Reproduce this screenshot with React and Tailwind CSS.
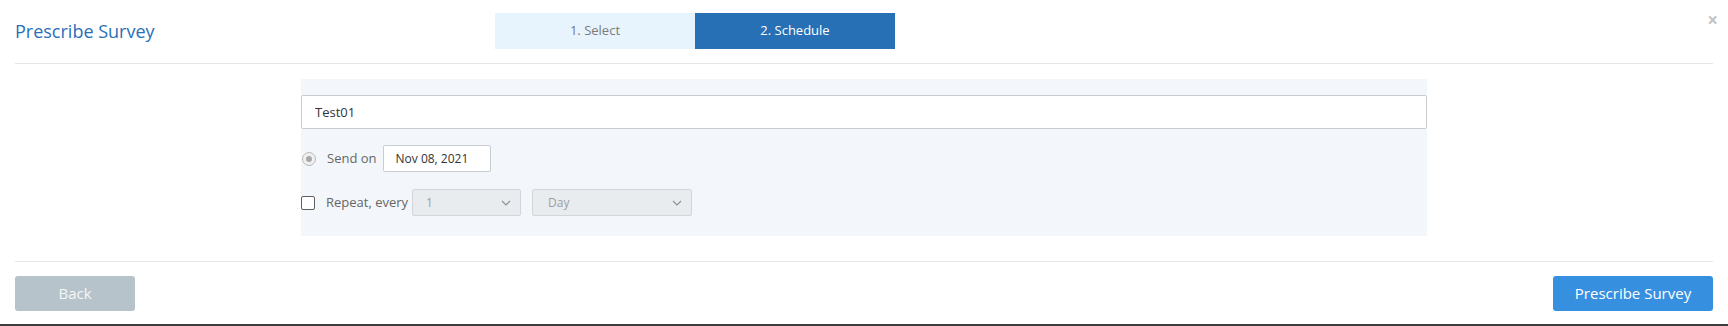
import React, { useState } from 'react';

const Chevron = () => (
  <svg width="10" height="6" viewBox="0 0 10 6" fill="none" className="shrink-0">
    <path d="M1 1l4 4 4-4" stroke="#8a8f96" strokeWidth="1.1" />
  </svg>
);

const PrescribeSurvey = () => {
  const [name, setName] = useState('Test01');

  return (
    <div className="w-full h-[326px] bg-white font-['Open_Sans',sans-serif]">
      <div className="relative h-[326px] flex flex-col px-[15px] border-b-2 border-[#3d3d3d]">
        {/* Header */}
        <div className="h-[64px] flex items-start border-b border-[#e5e5e5] shrink-0">
          <h1 className="w-[480px] pt-[19px] text-[18px] leading-[24px] text-[#2a6fb8]">Prescribe Survey</h1>
          <div className="mt-[13px] flex">
            <div className="w-[200px] h-[36px] flex items-center justify-center bg-[#e7f4fd] text-[13px] text-[#7a7a7a]">1. Select</div>
            <div className="w-[200px] h-[36px] flex items-center justify-center bg-[#2770b5] text-[13px] text-white">2. Schedule</div>
          </div>
        </div>
        <button className="absolute right-[10px] top-[10px] text-[19px] font-bold leading-[20px] text-[#c4c4c4]">×</button>

        {/* Body */}
        <div className="pt-[15px] pb-[25px] border-b border-[#e5e5e5] shrink-0">
          <div className="mx-auto w-[1126px] h-[157px] bg-[#f3f6fa] pt-[16px]">
            <input
              value={name}
              onChange={(e) => setName(e.target.value)}
              className="w-full h-[34px] bg-white border border-[#c9cdd2] rounded-[2px] px-[13px] text-[13px] text-[#333] outline-none"
            />
            <div className="mt-[16px] flex items-center h-[27px]">
              <span className="ml-[1px] w-[14px] h-[14px] rounded-full border border-[#b8b8b8] bg-[#f0f0f0] flex items-center justify-center">
                <span className="w-[6px] h-[6px] rounded-full bg-[#a8a8a8]" />
              </span>
              <span className="ml-[11px] text-[13px] text-[#666]">Send on</span>
              <div className="ml-[6px] w-[108px] h-[27px] bg-white border border-[#c9cdd2] rounded-[2px] flex items-center pl-[12px] text-[12px] text-[#333]">Nov 08, 2021</div>
            </div>
            <div className="mt-[17px] flex items-center h-[27px]">
              <span className="w-[14px] h-[14px] rounded-[2px] border-[1.5px] border-[#5f5f5f] bg-white" />
              <span className="ml-[11px] text-[13px] text-[#666]">Repeat, every</span>
              <div className="ml-[4px] w-[109px] h-[27px] bg-[#e9ecef] border border-[#d2d6db] rounded-[2px] flex items-center justify-between pl-[13px] pr-[9px] text-[12px] text-[#9a9ea3]">
                <span>1</span>
                <Chevron />
              </div>
              <div className="ml-[11px] w-[160px] h-[27px] bg-[#e9ecef] border border-[#d2d6db] rounded-[2px] flex items-center justify-between pl-[15px] pr-[9px] text-[12px] text-[#9a9ea3]">
                <span>Day</span>
                <Chevron />
              </div>
            </div>
          </div>
        </div>

        {/* Footer */}
        <div className="pt-[14px] flex justify-between">
          <button className="w-[120px] h-[35px] rounded-[3px] bg-[#b6c3cb] text-[15px] text-[#f4f6f8]">Back</button>
          <button className="w-[160px] h-[35px] rounded-[3px] bg-[#378fe0] text-[15px] text-white">Prescribe Survey</button>
        </div>
      </div>
    </div>
  );
};

export default PrescribeSurvey;
